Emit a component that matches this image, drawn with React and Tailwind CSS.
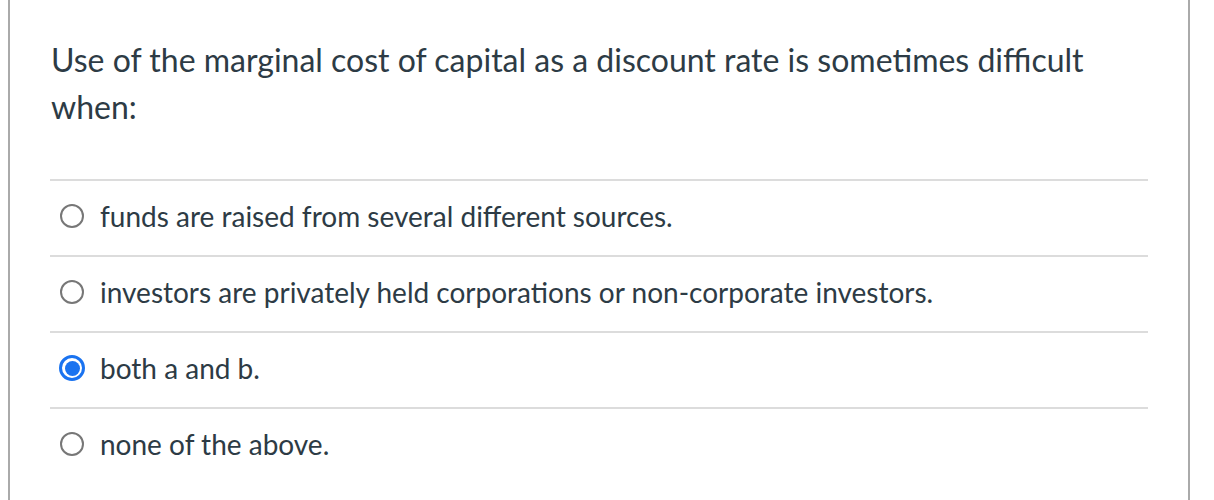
import React from 'react'

const options = [
  { id: 'a', label: 'funds are raised from several different sources.' },
  { id: 'b', label: 'investors are privately held corporations or non-corporate investors.' },
  { id: 'c', label: 'both a and b.', checked: true },
  { id: 'd', label: 'none of the above.' },
]

function Radio({ checked }) {
  if (checked) {
    return (
      <span className="flex h-[26px] w-[26px] shrink-0 items-center justify-center rounded-full border-[3px] border-[#1a73f0] bg-white">
        <span className="h-[15px] w-[15px] rounded-full bg-[#1a73f0]" />
      </span>
    )
  }
  return (
    <span className="flex h-[26px] w-[26px] shrink-0 items-center justify-center">
      <span className="h-[24px] w-[24px] rounded-full border-2 border-[#777777] bg-white" />
    </span>
  )
}

export default function App() {
  return (
    <div className="min-h-[500px] bg-white pl-[8px] font-['Lato','Liberation_Sans',sans-serif] text-[#2d3b45]">
      <div className="min-h-[500px] w-[1182px] border-x-2 border-[#aaaaaa] px-10 pt-[36px]">
        {/* Question */}
        <div className="pl-[1px] text-[32px] leading-[47px]">
          Use of the marginal cost of capital as a discount rate is sometimes difficult when:
        </div>

        {/* Answers */}
        <div className="mt-[49px]">
          {options.map((o) => (
            <div
              key={o.id}
              className="flex h-[76px] items-center gap-[15px] border-t-2 border-[#dcdcdc] pb-[4px] pl-[9px] text-[28px]"
            >
              <Radio checked={o.checked} />
              <span>{o.label}</span>
            </div>
          ))}
        </div>
      </div>
    </div>
  )
}
